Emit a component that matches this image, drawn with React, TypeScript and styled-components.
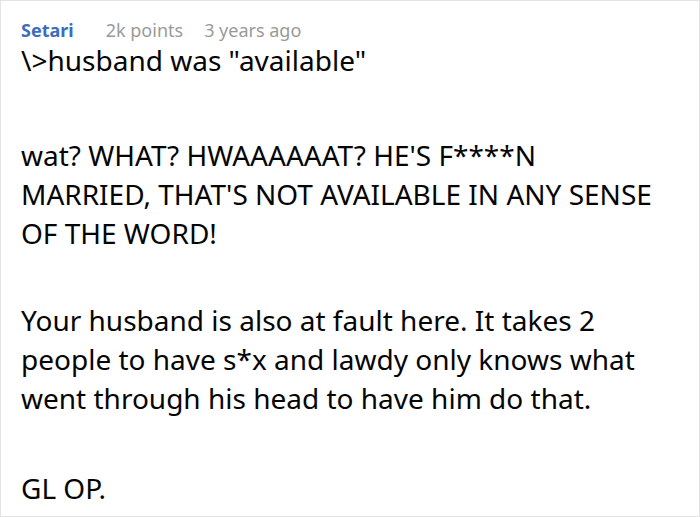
import styled, { createGlobalStyle } from "styled-components";

const GlobalStyle = createGlobalStyle`
  html, body {
    margin: 0;
    padding: 0;
    background: #ffffff;
  }
  body {
    font-family: "Noto Sans", "Open Sans", sans-serif;
  }
`;

const Card = styled.div`
  box-sizing: border-box;
  width: 700px;
  height: 517px;
  border: 1px solid #e3e3e3;
  padding: 19px 39px 0 20px;
  background: #ffffff;
  overflow: hidden;
`;

const Meta = styled.div`
  display: flex;
  align-items: baseline;
  gap: 21px;
  font-size: 18px;
  line-height: 20px;
`;

const Author = styled.span`
  color: #3d6dbd;
  font-weight: 700;
  margin-right: 11px;
`;

const MetaItem = styled.span`
  color: #9a9a9a;
`;

const Body = styled.div`
  color: #050505;
  font-size: 28px;
  line-height: 39px;
  margin-top: 1px;
`;

const Para = styled.p<{ $gap?: number }>`
  margin: ${(p) => p.$gap ?? 48}px 0 0 0;
`;

const paragraphs: { text: string; gap: number }[] = [
  { text: '\\>husband was "available"', gap: 0 },
  {
    text: "wat? WHAT? HWAAAAAAT? HE'S F****N MARRIED, THAT'S NOT AVAILABLE IN ANY SENSE OF THE WORD!",
    gap: 56,
  },
  {
    text: "Your husband is also at fault here. It takes 2 people to have s*x and lawdy only knows what went through his head to have him do that.",
    gap: 48,
  },
  { text: "GL OP.", gap: 51 },
];

export default function App() {
  return (
    <>
      <GlobalStyle />
      <Card>
        <Meta>
          <Author>Setari</Author>
          <MetaItem>2k points</MetaItem>
          <MetaItem>3 years ago</MetaItem>
        </Meta>
        <Body>
          {paragraphs.map((p, i) => (
            <Para key={i} $gap={p.gap}>
              {p.text}
            </Para>
          ))}
        </Body>
      </Card>
    </>
  );
}
